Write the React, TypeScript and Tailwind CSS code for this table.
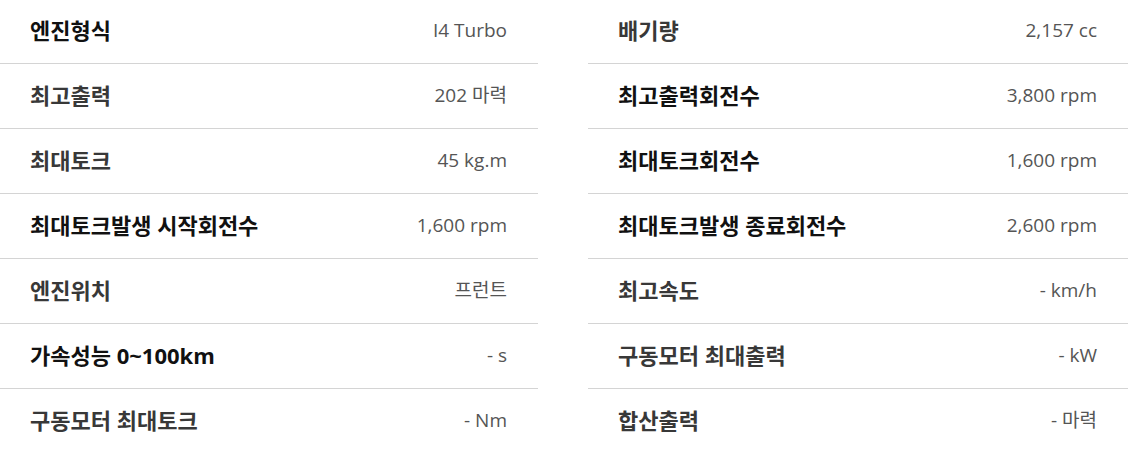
import React from 'react';

interface Spec {
  label: string;
  value: string;
  strong?: boolean; // 진한 라벨
}

const left: Spec[] = [
  { label: '엔진형식', value: 'I4 Turbo', strong: true },
  { label: '최고출력', value: '202 마력' },
  { label: '최대토크', value: '45 kg.m' },
  { label: '최대토크발생 시작회전수', value: '1,600 rpm', strong: true },
  { label: '엔진위치', value: '프런트' },
  { label: '가속성능 0~100km', value: '- s', strong: true },
  { label: '구동모터 최대토크', value: '- Nm' },
];

const right: Spec[] = [
  { label: '배기량', value: '2,157 cc' },
  { label: '최고출력회전수', value: '3,800 rpm', strong: true },
  { label: '최대토크회전수', value: '1,600 rpm', strong: true },
  { label: '최대토크발생 종료회전수', value: '2,600 rpm', strong: true },
  { label: '최고속도', value: '- km/h' },
  { label: '구동모터 최대출력', value: '- kW' },
  { label: '합산출력', value: '- 마력' },
];

function SpecList({ items }: { items: Spec[] }) {
  return (
    <ul>
      {items.map((item, i) => (
        <li
          key={item.label}
          className={`flex h-[65px] items-center justify-between px-[30px] pb-[2px] ${
            i < items.length - 1 ? 'border-b border-[#d4d4d4]' : ''
          }`}
        >
          <span
            className={`text-[22px] font-bold ${item.strong ? 'text-[#111]' : 'text-[#383838]'}`}
          >
            {item.label}
          </span>
          <span className="pr-px text-[19px] text-[#555]">{item.value}</span>
        </li>
      ))}
    </ul>
  );
}

export default function App() {
  return (
    <div
      className="h-[452px] w-[1128px] overflow-hidden bg-white"
      style={{ fontFamily: '"Open Sans", "Noto Sans CJK KR", sans-serif' }}
    >
      <div className="-mt-px grid grid-cols-[538px_540px] gap-x-[50px]">
        <SpecList items={left} />
        <SpecList items={right} />
      </div>
    </div>
  );
}
